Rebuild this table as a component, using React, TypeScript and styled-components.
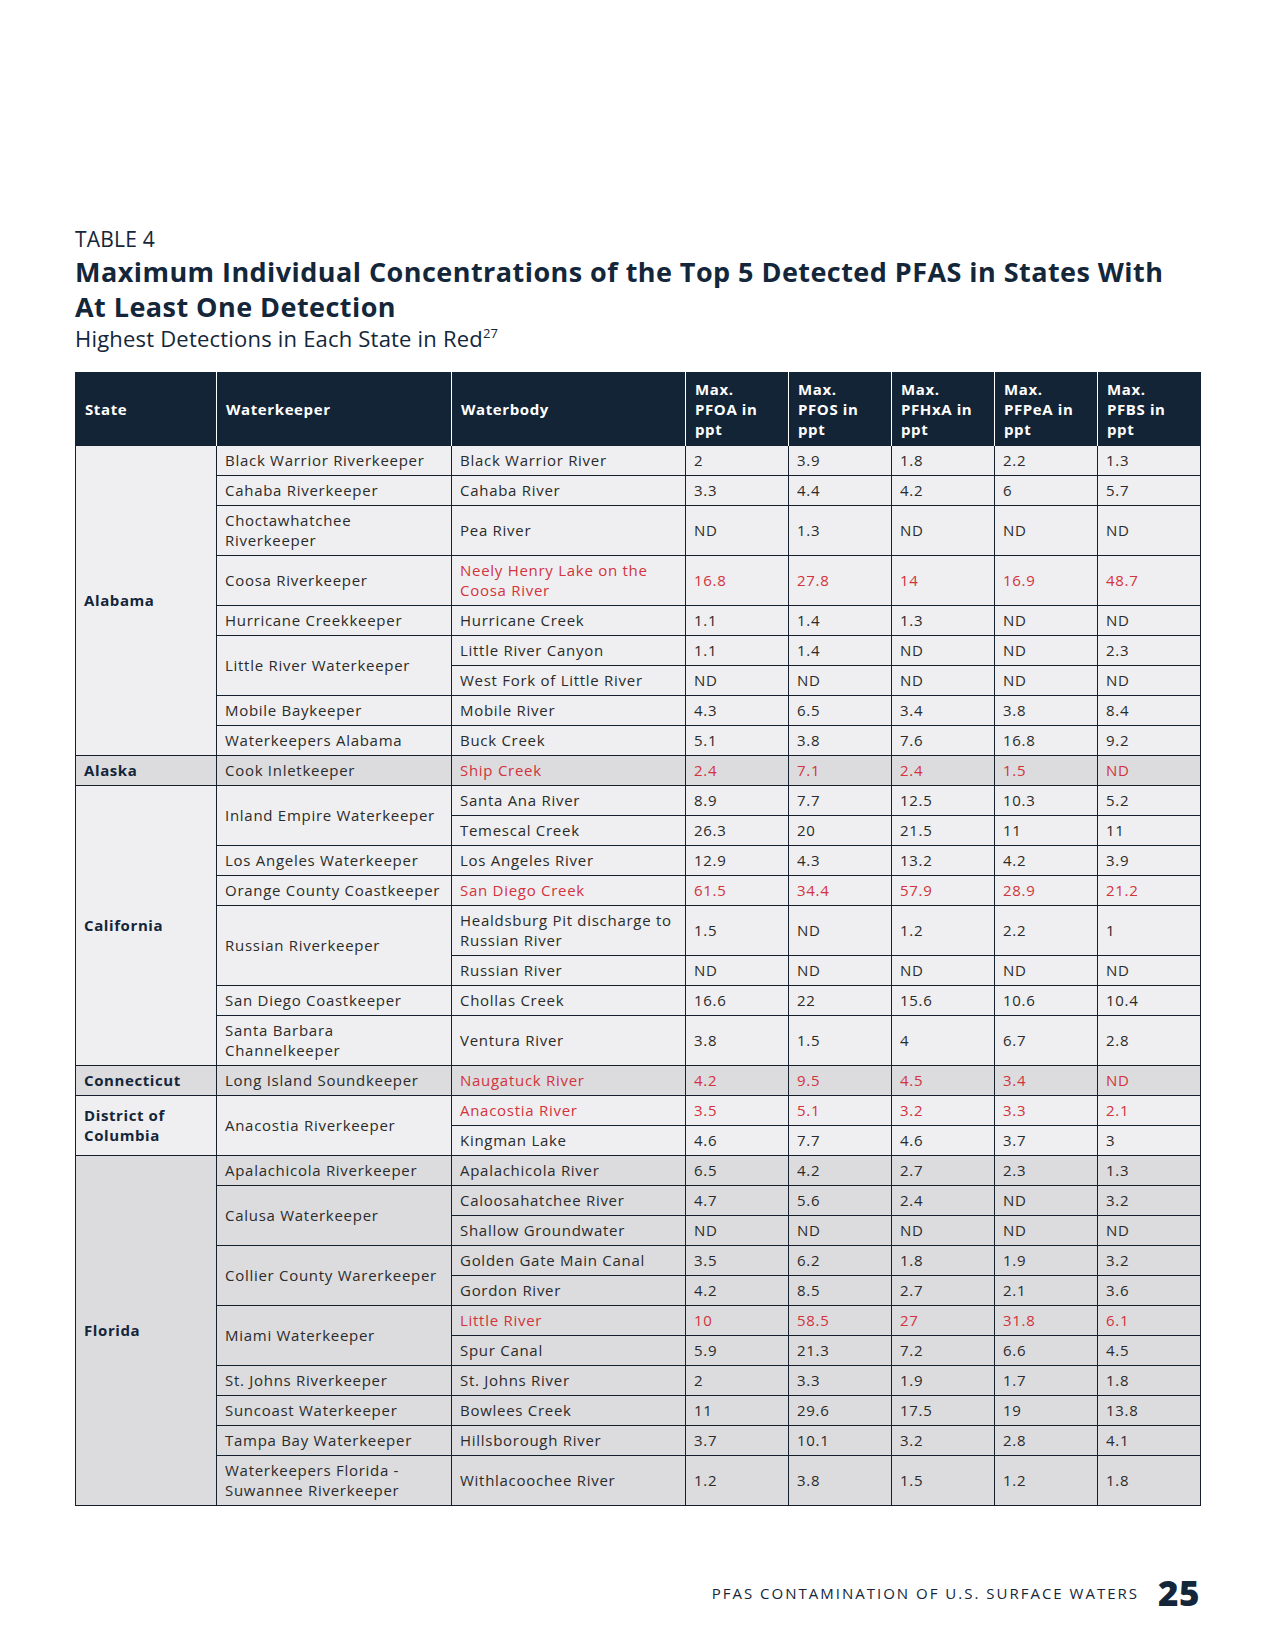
import styled, { createGlobalStyle } from "styled-components";

interface IRow {
  body: string;
  values: string[];
  red?: boolean;
}

interface IKeeper {
  name: string;
  rows: IRow[];
}

interface IGroup {
  state: string;
  dark?: boolean;
  keepers: IKeeper[];
}

const GlobalStyle = createGlobalStyle`
  html, body {
    margin: 0;
    padding: 0;
    background: #ffffff;
  }
  body {
    font-family: "Open Sans", "Liberation Sans", sans-serif;
    color: #2b2b2b;
  }
`;

const Page = styled.div`
  width: 1275px;
  height: 1651px;
  box-sizing: border-box;
  padding: 226px 75px 0;
  display: flex;
  flex-direction: column;
`;

const Caption = styled.div`
  color: #14263a;
`;

const Label = styled.div`
  font-size: 21px;
  line-height: 26px;
  letter-spacing: 0.2px;
`;

const Title = styled.h1`
  margin: 2px 0 0;
  font-size: 27px;
  line-height: 35px;
  font-weight: 700;
  letter-spacing: 0.45px;
`;

const Subtitle = styled.div`
  font-size: 22px;
  line-height: 28px;
  letter-spacing: 0.2px;
  sup {
    font-size: 13px;
    vertical-align: 9px;
    line-height: 0;
  }
`;

const Table = styled.table`
  margin-top: 20px;
  width: 1125px;
  border-collapse: collapse;
  table-layout: fixed;
  font-size: 15px;
  line-height: 20px;
`;

const HeadCell = styled.th`
  background: #122436;
  color: #ffffff;
  text-align: left;
  font-weight: 700;
  font-size: 15px;
  letter-spacing: 0.6px;
  line-height: 20px;
  padding: 6px 9px;
  height: 61px;
  vertical-align: middle;
  white-space: nowrap;
  border-left: 1px solid #ffffff;
  &:first-child {
    border-left: 1px solid #122436;
  }
`;

const Cell = styled.td<{ $dark?: boolean; $red?: boolean; $bold?: boolean }>`
  background: ${(p) => (p.$dark ? "#dcdcdf" : "#efeff1")};
  color: ${(p) => (p.$red ? "#d2333c" : p.$bold ? "#14263a" : "#2b2b2b")};
  font-weight: ${(p) => (p.$bold ? 700 : 400)};
  border: 1.5px solid #14202d;
  padding: 4px 8px 5px;
  height: 20px;
  vertical-align: middle;
  letter-spacing: ${(p) => (p.$bold ? "0.6px" : "0.72px")};
`;

const Footer = styled.div`
  margin-top: auto;
  margin-bottom: 35px;
  display: flex;
  justify-content: flex-end;
  align-items: center;
  gap: 19px;
  color: #14263a;
`;

const FooterText = styled.span`
  font-size: 15px;
  letter-spacing: 2px;
`;

const PageNumber = styled.span`
  font-size: 35px;
  font-weight: 800;
  letter-spacing: 0.5px;
`;

const r = (body: string, values: string, red?: boolean): IRow => ({
  body,
  values: values.split(" "),
  red,
});

const groups: IGroup[] = [
  {
    state: "Alabama",
    keepers: [
      { name: "Black Warrior Riverkeeper", rows: [r("Black Warrior River", "2 3.9 1.8 2.2 1.3")] },
      { name: "Cahaba Riverkeeper", rows: [r("Cahaba River", "3.3 4.4 4.2 6 5.7")] },
      { name: "Choctawhatchee Riverkeeper", rows: [r("Pea River", "ND 1.3 ND ND ND")] },
      { name: "Coosa Riverkeeper", rows: [r("Neely Henry Lake on the Coosa River", "16.8 27.8 14 16.9 48.7", true)] },
      { name: "Hurricane Creekkeeper", rows: [r("Hurricane Creek", "1.1 1.4 1.3 ND ND")] },
      {
        name: "Little River Waterkeeper",
        rows: [
          r("Little River Canyon", "1.1 1.4 ND ND 2.3"),
          r("West Fork of Little River", "ND ND ND ND ND"),
        ],
      },
      { name: "Mobile Baykeeper", rows: [r("Mobile River", "4.3 6.5 3.4 3.8 8.4")] },
      { name: "Waterkeepers Alabama", rows: [r("Buck Creek", "5.1 3.8 7.6 16.8 9.2")] },
    ],
  },
  {
    state: "Alaska",
    dark: true,
    keepers: [{ name: "Cook Inletkeeper", rows: [r("Ship Creek", "2.4 7.1 2.4 1.5 ND", true)] }],
  },
  {
    state: "California",
    keepers: [
      {
        name: "Inland Empire Waterkeeper",
        rows: [
          r("Santa Ana River", "8.9 7.7 12.5 10.3 5.2"),
          r("Temescal Creek", "26.3 20 21.5 11 11"),
        ],
      },
      { name: "Los Angeles Waterkeeper", rows: [r("Los Angeles River", "12.9 4.3 13.2 4.2 3.9")] },
      { name: "Orange County Coastkeeper", rows: [r("San Diego Creek", "61.5 34.4 57.9 28.9 21.2", true)] },
      {
        name: "Russian Riverkeeper",
        rows: [
          r("Healdsburg Pit discharge to Russian River", "1.5 ND 1.2 2.2 1"),
          r("Russian River", "ND ND ND ND ND"),
        ],
      },
      { name: "San Diego Coastkeeper", rows: [r("Chollas Creek", "16.6 22 15.6 10.6 10.4")] },
      { name: "Santa Barbara Channelkeeper", rows: [r("Ventura River", "3.8 1.5 4 6.7 2.8")] },
    ],
  },
  {
    state: "Connecticut",
    dark: true,
    keepers: [{ name: "Long Island Soundkeeper", rows: [r("Naugatuck River", "4.2 9.5 4.5 3.4 ND", true)] }],
  },
  {
    state: "District of Columbia",
    keepers: [
      {
        name: "Anacostia Riverkeeper",
        rows: [
          r("Anacostia River", "3.5 5.1 3.2 3.3 2.1", true),
          r("Kingman Lake", "4.6 7.7 4.6 3.7 3"),
        ],
      },
    ],
  },
  {
    state: "Florida",
    dark: true,
    keepers: [
      { name: "Apalachicola Riverkeeper", rows: [r("Apalachicola River", "6.5 4.2 2.7 2.3 1.3")] },
      {
        name: "Calusa Waterkeeper",
        rows: [
          r("Caloosahatchee River", "4.7 5.6 2.4 ND 3.2"),
          r("Shallow Groundwater", "ND ND ND ND ND"),
        ],
      },
      {
        name: "Collier County Warerkeeper",
        rows: [
          r("Golden Gate Main Canal", "3.5 6.2 1.8 1.9 3.2"),
          r("Gordon River", "4.2 8.5 2.7 2.1 3.6"),
        ],
      },
      {
        name: "Miami Waterkeeper",
        rows: [
          r("Little River", "10 58.5 27 31.8 6.1", true),
          r("Spur Canal", "5.9 21.3 7.2 6.6 4.5"),
        ],
      },
      { name: "St. Johns Riverkeeper", rows: [r("St. Johns River", "2 3.3 1.9 1.7 1.8")] },
      { name: "Suncoast Waterkeeper", rows: [r("Bowlees Creek", "11 29.6 17.5 19 13.8")] },
      { name: "Tampa Bay Waterkeeper", rows: [r("Hillsborough River", "3.7 10.1 3.2 2.8 4.1")] },
      { name: "Waterkeepers Florida - Suwannee Riverkeeper", rows: [r("Withlacoochee River", "1.2 3.8 1.5 1.2 1.8")] },
    ],
  },
];

const columns = [141, 235, 234, 103, 103, 103, 103, 103];
const headers: string[][] = [
  ["State"],
  ["Waterkeeper"],
  ["Waterbody"],
  ["Max.", "PFOA in", "ppt"],
  ["Max.", "PFOS in", "ppt"],
  ["Max.", "PFHxA in", "ppt"],
  ["Max.", "PFPeA in", "ppt"],
  ["Max.", "PFBS in", "ppt"],
];

const App = () => {
  return (
    <>
      <GlobalStyle />
      <Page>
        <Caption>
          <Label>TABLE 4</Label>
          <Title>
            Maximum Individual Concentrations of the Top 5 Detected PFAS in States With
            <br />
            At Least One Detection
          </Title>
          <Subtitle>
            Highest Detections in Each State in Red<sup>27</sup>
          </Subtitle>
        </Caption>
        <Table>
          <colgroup>
            {columns.map((w, i) => (
              <col key={i} style={{ width: w }} />
            ))}
          </colgroup>
          <thead>
            <tr>
              {headers.map((lines) => (
                <HeadCell key={lines.join(" ")}>
                  {lines.map((line, li) => (
                    <div key={li}>{line}</div>
                  ))}
                </HeadCell>
              ))}
            </tr>
          </thead>
          <tbody>
            {groups.map((group) => {
              const stateSpan = group.keepers.reduce((n, k) => n + k.rows.length, 0);
              return group.keepers.map((keeper, ki) =>
                keeper.rows.map((row, ri) => (
                  <tr key={`${group.state}-${keeper.name}-${row.body}`}>
                    {ki === 0 && ri === 0 && (
                      <Cell $dark={group.dark} $bold rowSpan={stateSpan}>
                        {group.state}
                      </Cell>
                    )}
                    {ri === 0 && (
                      <Cell $dark={group.dark} rowSpan={keeper.rows.length}>
                        {keeper.name}
                      </Cell>
                    )}
                    <Cell $dark={group.dark} $red={row.red}>
                      {row.body}
                    </Cell>
                    {row.values.map((v, vi) => (
                      <Cell key={vi} $dark={group.dark} $red={row.red}>
                        {v}
                      </Cell>
                    ))}
                  </tr>
                ))
              );
            })}
          </tbody>
        </Table>
        <Footer>
          <FooterText>PFAS CONTAMINATION OF U.S. SURFACE WATERS</FooterText>
          <PageNumber>25</PageNumber>
        </Footer>
      </Page>
    </>
  );
};

export default App;
